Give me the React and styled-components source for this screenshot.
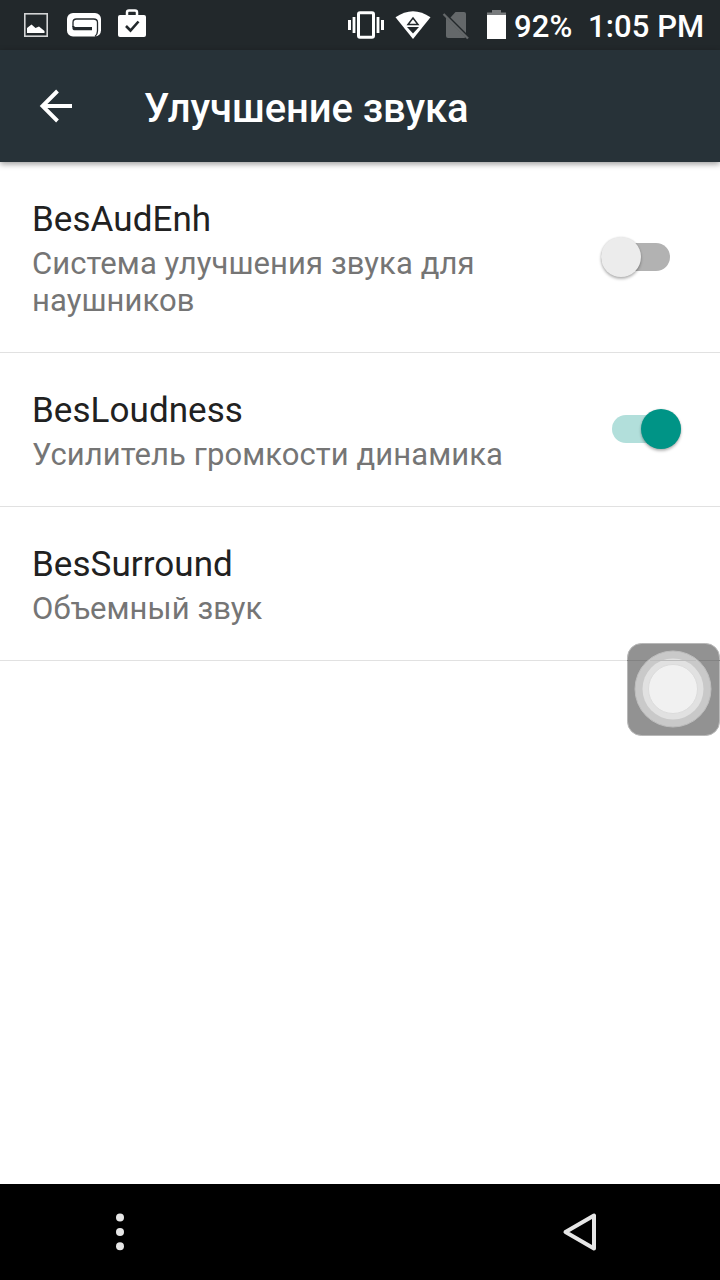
import React from 'react';
import styled, {createGlobalStyle} from 'styled-components';

const GlobalStyle = createGlobalStyle`
    body{
        margin:0;
        background:#fff;
        font-family:Roboto, 'Noto Sans', sans-serif;
    }
`;

const Screen = styled.div`
    position:relative;
    display:flex;
    flex-direction:column;
    width:720px;
    height:1280px;
    overflow:hidden;
    background:#fff;
`;

const StatusBar = styled.div`
    display:flex;
    justify-content:space-between;
    height:50px;
    flex-shrink:0;
    background:#22282b;
    color:#fff;
`;

const StatusGroup = styled.div`
    display:flex;
    align-items:flex-start;
`;

const StatusIcon = styled.svg`
    display:block;
    flex-shrink:0;
`;

const StatusText = styled.span`
    width:${({$width}) => $width}px;
    font-size:31px;
    font-weight:500;
    line-height:54px;
    letter-spacing:0.1px;
    white-space:nowrap;
`;

const Header = styled.header`
    z-index:1;
    display:flex;
    align-items:center;
    height:112px;
    flex-shrink:0;
    background:#273238;
    color:#fff;
    box-shadow:0 2px 6px rgba(0,0,0,0.4);
`;

const BackButton = styled.button`
    display:block;
    width:144px;
    height:112px;
    padding:0;
    border:0;
    background:none;
`;

const HeaderTitle = styled.h1`
    margin:6px 0 0;
    font-size:40px;
    font-weight:500;
    line-height:48px;
    letter-spacing:-0.08px;
    white-space:nowrap;
`;

const List = styled.main`
    flex:1;
`;

const Row = styled.div`
    display:flex;
    align-items:flex-start;
    justify-content:space-between;
    padding:37px 32px 33px;
    border-bottom:1px solid #e1e1e1;
`;

const RowText = styled.div`
    width:480px;
`;

const RowTitle = styled.div`
    margin-bottom:4px;
    color:#212121;
    font-size:35px;
    line-height:42px;
    letter-spacing:0.06px;
`;

const RowSummary = styled.div`
    color:#757575;
    font-size:31px;
    line-height:37px;
    letter-spacing:0.08px;
`;

const SwitchBox = styled.div`
    display:flex;
    align-items:center;
    align-self:center;
    justify-content:${({$on}) => ($on ? 'flex-end' : 'flex-start')};
    width:69px;
    height:28px;
    margin-right:${({$on}) => ($on ? 7 : 18)}px;
    margin-bottom:${({$on}) => ($on ? 5 : 4)}px;
    border-radius:14px;
    background:${({$on}) => ($on ? '#b2dfdb' : '#b2b2b2')};
`;

const Knob = styled.div`
    width:40px;
    height:40px;
    flex-shrink:0;
    border-radius:50%;
    background:${({$on}) => ($on ? '#009486' : '#ececec')};
    box-shadow:0 2px 3px rgba(0,0,0,0.28), 0 0 2px rgba(0,0,0,0.12);
`;

const FloatingButton = styled.div`
    position:absolute;
    top:643px;
    left:627px;
    width:93px;
    height:93px;
`;

const NavBar = styled.nav`
    display:flex;
    justify-content:space-between;
    align-items:center;
    height:96px;
    flex-shrink:0;
    padding:0 100px;
    background:#000;
`;

const Switch = ({on}) => (
    <SwitchBox $on={on}>
        <Knob $on={on} />
    </SwitchBox>
);

const NotificationIcons = () => (
    <StatusIcon width="180" height="50" viewBox="0 0 180 50">
        <rect x="24.8" y="13.8" width="22.4" height="22.4" fill="none" stroke="#d3d4d5" strokeWidth="1.6" />
        <path d="M27 33V28L31.500 24.500L35.500 28L39 26.500L44.500 31V33Z" fill="#fff" />
        <rect x="67" y="13" width="34" height="23.500" rx="6" fill="#fff" />
        <path d="M73 27V22.500Q73 19 76.500 19H93.500Q97.500 19 97.500 22.500V31Q97.500 34.500 95 36.500" fill="none" stroke="#22282b" strokeWidth="1.300" />
        <path d="M72.400 26H74.500V27H92V30.300H75Q72.400 30.300 72.400 28Z" fill="#22282b" />
        <path d="M127 16V12.500Q127 10.500 129 10.500H135Q137 10.500 137 12.500V16" fill="none" stroke="#fff" strokeWidth="2.500" />
        <rect x="118" y="15" width="28" height="22" rx="2" fill="#fff" />
        <path d="M126 26L130.500 30.500L138.500 21.500" fill="none" stroke="#22282b" strokeWidth="2.600" />
    </StatusIcon>
);

const SystemIcons = () => (
    <StatusIcon width="170" height="50" viewBox="344 0 170 50">
        <rect x="358.500" y="12.700" width="15" height="24.600" rx="1.500" fill="none" stroke="#fff" strokeWidth="3" />
        <path d="M349.500 20V30M382.500 20V30" stroke="#fff" strokeWidth="3" />
        <path d="M354 17V33M378 17V33" stroke="#fff" strokeWidth="2.800" />
        <path d="M395.500 17.300Q413 5 430.500 17.300L413 39Z" fill="#fff" />
        <path d="M413 18L418 24.500H408Z" fill="#fff" stroke="#22282b" strokeWidth="1.500" />
        <path d="M407 27H419L413 33.500Z" fill="#22282b" />
        <path d="M455.500 12H464Q466 12 466 14V33L450.500 17.500Z" fill="#64686a" />
        <path d="M446 17.500L465.500 37Q465 38 464 38H448Q446 38 446 36Z" fill="#64686a" />
        <path d="M443.500 14L468 38.500" stroke="#64686a" strokeWidth="2.300" />
        <path d="M492 10H501V12.500H506V15H487V12.500H492Z" fill="#777a7c" />
        <rect x="487" y="15" width="19" height="24" fill="#fff" />
    </StatusIcon>
);

const items = [
    {title: 'BesAudEnh', summary: 'Система улучшения звука для наушников', toggle: true, on: false},
    {title: 'BesLoudness', summary: 'Усилитель громкости динамика', toggle: true, on: true},
    {title: 'BesSurround', summary: 'Объемный звук', toggle: false},
];

const App = () => {
    return (
        <>
            <GlobalStyle />
            <Screen>
                <StatusBar>
                    <NotificationIcons />
                    <StatusGroup>
                        <SystemIcons />
                        <StatusText $width={74}>92%</StatusText>
                        <StatusText $width={132}>1:05 PM</StatusText>
                    </StatusGroup>
                </StatusBar>
                <Header>
                    <BackButton aria-label="Назад">
                        <svg width="144" height="112" viewBox="0 50 144 112">
                            <path d="M72 106H43M57.500 91L42.500 106L57.500 121" fill="none" stroke="#fff" strokeWidth="3.900" />
                        </svg>
                    </BackButton>
                    <HeaderTitle>Улучшение звука</HeaderTitle>
                </Header>
                <List>
                    {items.map(({title, summary, toggle, on}) => (
                        <Row key={title}>
                            <RowText>
                                <RowTitle>{title}</RowTitle>
                                <RowSummary>{summary}</RowSummary>
                            </RowText>
                            {toggle && <Switch on={on} />}
                        </Row>
                    ))}
                </List>
                <NavBar>
                    <svg width="40" height="96" viewBox="100 1184 40 96" fill="#e6e6e6">
                        <circle cx="120" cy="1217.500" r="4" />
                        <circle cx="120" cy="1232" r="4" />
                        <circle cx="120" cy="1246.300" r="4" />
                    </svg>
                    <svg width="60" height="96" viewBox="560 1184 60 96">
                        <path d="M594 1215.500V1248.500L565.500 1232Z" fill="none" stroke="#e6e6e6" strokeWidth="4" strokeLinejoin="round" />
                    </svg>
                </NavBar>
                <FloatingButton>
                    <svg width="93" height="93" viewBox="627 643 93 93">
                        <rect x="627.500" y="643.500" width="92" height="92" rx="14" fill="#929292" stroke="#b8b8b8" />
                        <path d="M627 660.500H720" stroke="#838383" />
                        <circle cx="673" cy="689" r="38" fill="#c9c9c9" stroke="#bdbdbd" />
                        <circle cx="673" cy="689" r="30.500" fill="#e1e1e1" />
                        <circle cx="673" cy="689" r="24.500" fill="#f1f1f1" stroke="#dcdcdc" />
                        <path d="M650 660.500H696" stroke="#bcbcbc" />
                    </svg>
                </FloatingButton>
            </Screen>
        </>
    );
};

export default App;
